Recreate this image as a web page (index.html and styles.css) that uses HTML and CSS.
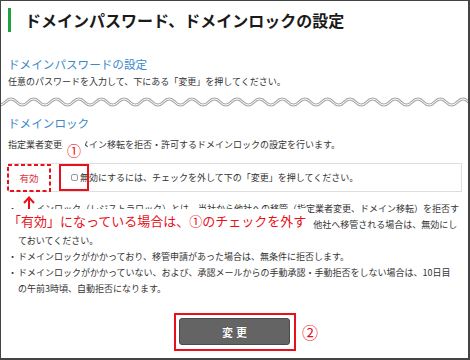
FILE: index.html
```html
<!DOCTYPE html>
<html lang="ja">
<head>
    <meta charset="UTF-8">
    <title>ドメインパスワード、ドメインロックの設定</title>
    <link rel="stylesheet" href="styles.css">
</head>
<body>
    <div class="frame">
        <h1 class="page-title">ドメインパスワード、ドメインロックの設定</h1>

        <!-- Domain password -->
        <h2 class="section-title">ドメインパスワードの設定</h2>
        <p class="note">任意のパスワードを入力して、下にある「変更」を押してください。</p>

        <svg class="wave" width="470" height="12" viewBox="0 0 470 12">
            <path d="M-18.25 6 q5.65 -6 11.3 0 t11.3 0 t11.3 0 t11.3 0 t11.3 0 t11.3 0 t11.3 0 t11.3 0 t11.3 0 t11.3 0 t11.3 0 t11.3 0 t11.3 0 t11.3 0 t11.3 0 t11.3 0 t11.3 0 t11.3 0 t11.3 0 t11.3 0 t11.3 0 t11.3 0 t11.3 0 t11.3 0 t11.3 0 t11.3 0 t11.3 0 t11.3 0 t11.3 0 t11.3 0 t11.3 0 t11.3 0 t11.3 0 t11.3 0 t11.3 0 t11.3 0 t11.3 0 t11.3 0 t11.3 0 t11.3 0 t11.3 0 t11.3 0 t11.3 0 t11.3 0" fill="none" stroke="#a8a8a8" stroke-width="3"/>
            <path d="M-18.25 6 q5.65 -6 11.3 0 t11.3 0 t11.3 0 t11.3 0 t11.3 0 t11.3 0 t11.3 0 t11.3 0 t11.3 0 t11.3 0 t11.3 0 t11.3 0 t11.3 0 t11.3 0 t11.3 0 t11.3 0 t11.3 0 t11.3 0 t11.3 0 t11.3 0 t11.3 0 t11.3 0 t11.3 0 t11.3 0 t11.3 0 t11.3 0 t11.3 0 t11.3 0 t11.3 0 t11.3 0 t11.3 0 t11.3 0 t11.3 0 t11.3 0 t11.3 0 t11.3 0 t11.3 0 t11.3 0 t11.3 0 t11.3 0 t11.3 0 t11.3 0 t11.3 0 t11.3 0" fill="none" stroke="#fff" stroke-width="1"/>
        </svg>

        <!-- Domain lock -->
        <h2 class="section-title section-title-lock">ドメインロック</h2>
        <p class="note note-lock">指定業者変更、ドメイン移転を拒否・許可するドメインロックの設定を行います。</p>

        <div class="lock-row">
            <div class="lock-status">有効</div>
            <label class="lock-check"><span class="checkbox"></span>無効にするには、チェックを外して下の「変更」を押してください。</label>
        </div>

        <ul class="lock-notes">
            <li>ドメインロック（レジストラロック）とは、当社から他社への移管（指定業者変更、ドメイン移転）を拒否す<br>る機能です。ドメインの不正な移管を未然に防ぐことができます。なお、他社へ移管される場合は、無効にし<br>ておいてください。</li>
            <li>ドメインロックがかかっており、移管申請があった場合は、無条件に拒否します。</li>
            <li>ドメインロックがかかっていない、および、承認メールからの手動承認・手動拒否をしない場合は、10日目<br>の午前3時頃、自動拒否になります。</li>
        </ul>

        <div class="submit-area">
            <span class="mark-box"><button type="button" class="submit-button">変更</button></span>
        </div>

        <!-- Annotations -->
        <span class="mark-num mark-num-1">①</span>
        <svg class="mark-dashed" width="44" height="28" viewBox="0 0 44 28">
            <rect x="1" y="1" width="42" height="26" fill="none" stroke="#e8101a" stroke-width="2" stroke-dasharray="4 2.5"/>
        </svg>
        <span class="mark-check"></span>
        <svg class="mark-arrow" width="20" height="17" viewBox="0 0 20 17">
            <path d="M11 3 V16 M6 8 L11 2.5 L16 8" fill="none" stroke="#e8101a" stroke-width="2"/>
        </svg>
        <div class="mark-text">「有効」になっている場合は、①のチェックを外す</div>
        <span class="mark-num mark-num-2">②</span>
    </div>
</body>
</html>
```

FILE: styles.css
```css
body {
    margin: 0;
    font-family: "Noto Sans CJK JP", "Noto Sans", sans-serif;
    color: #333;
    background: #fff;
}
.frame {
    position: relative;
    width: 470px;
    height: 360px;
    box-sizing: border-box;
    border-style: solid;
    border-color: #444;
    border-width: 1px 2px 2px 1px;
    padding: 0 6px 0 7px;
    overflow: hidden;
}
.page-title {
    margin: 7px 0 0;
    height: 24px;
    border-left: 3px solid #1fa23f;
    padding-left: 14px;
    font-size: 16px;
    line-height: 24px;
    font-weight: bold;
    color: #1a1a1a;
}
.section-title {
    margin: 24px 0 0;
    font-size: 11.6px;
    line-height: 16px;
    font-weight: normal;
    color: #3a89c9;
}
.section-title-lock {
    margin-top: 7px;
}
.note {
    margin: 2px 0 0;
    font-size: 9px;
    line-height: 16px;
    color: #333;
}
.note-lock {
    margin-top: 6px;
}
.wave {
    display: block;
    margin: 6px -6px 0 -7px;
}
/* Lock status row */
.lock-row {
    margin-top: 10px;
    height: 29px;
    box-sizing: border-box;
    border: 1px solid #dedede;
    display: flex;
    align-items: center;
}
.lock-status {
    width: 40px;
    text-align: center;
    font-size: 9.5px;
    color: #d9363e;
}
.lock-check {
    display: flex;
    align-items: center;
    padding-left: 22px;
    font-size: 9px;
    color: #333;
}
.checkbox {
    width: 7px;
    height: 7px;
    box-sizing: border-box;
    border: 1px solid #9a9a9a;
    border-radius: 2px;
    background: #fbfbfb;
    margin-right: 2px;
}
.lock-notes {
    list-style: none;
    margin: 9px 0 0;
    padding: 0 0 0 10px;
    font-size: 9px;
    line-height: 16px;
    color: #333;
}
.lock-notes li {
    text-indent: -10px;
    white-space: nowrap;
}
.lock-notes li::before {
    content: "・";
    display: inline-block;
    width: 10px;
    text-indent: 0;
}
/* Submit */
.submit-area {
    margin-top: 16px;
    text-align: center;
}
.mark-box {
    display: inline-block;
    border: 2px solid #e8101a;
    padding: 3px 4px 4px 3px;
    line-height: 0;
}
.submit-button {
    width: 111px;
    height: 27px;
    background: #646464;
    border: 1px solid #4a4a4a;
    border-radius: 3px;
    color: #fff;
    font-family: "Noto Sans CJK JP", sans-serif;
    font-size: 11px;
    font-weight: bold;
    letter-spacing: 3px;
    padding: 0 0 0 3px;
    text-shadow: 0 0 1px #222;
}
/* Annotation overlays */
.mark-num {
    position: absolute;
    color: #e8101a;
    background: #fff;
    line-height: 18px;
}
.mark-num-1 {
    left: 62px;
    top: 140px;
    font-size: 14px;
    padding: 0 4px;
}
.mark-num-2 {
    left: 301px;
    top: 322px;
    font-size: 16px;
}
.mark-dashed {
    position: absolute;
    left: 6px;
    top: 163px;
}
.mark-check {
    position: absolute;
    left: 58px;
    top: 163px;
    width: 30px;
    height: 27px;
    box-sizing: border-box;
    border: 2px solid #e8101a;
}
.mark-arrow {
    position: absolute;
    left: 17px;
    top: 194px;
    background: #fff;
}
.mark-text {
    position: absolute;
    left: 7px;
    top: 208px;
    padding-right: 2px;
    background: #fff;
    color: #e8101a;
    font-size: 13px;
    line-height: 24px;
}
```
